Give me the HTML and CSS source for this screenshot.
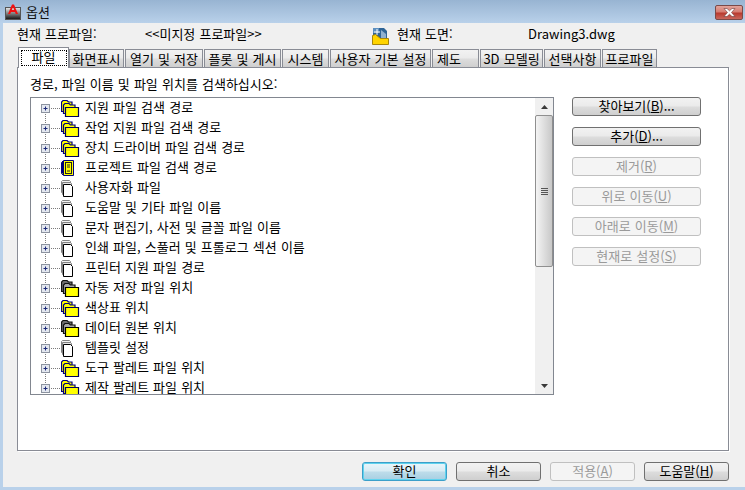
FILE: index.html
```html
<!DOCTYPE html>
<html lang="ko">
<head>
<meta charset="utf-8">
<title>옵션</title>
<link rel="stylesheet" href="styles.css">
</head>
<body>
<svg class="defs" width="0" height="0">
  <defs>
    <symbol id="i-exp" viewBox="0 0 30 20">
      <path d="M6.500 0V20M12 10.500H21" stroke="#7a7a7a" stroke-dasharray="1 1" fill="none"/>
      <rect x="2.500" y="6.500" width="8" height="8" fill="#e4e8f0" stroke="#8c93a0"/>
      <path d="M4.500 10.500h4M6.500 8.500v4" stroke="#1c2a78"/>
    </symbol>
    <symbol id="i-exp-first" viewBox="0 0 30 20">
      <path d="M6.500 10V20M12 10.500H21" stroke="#7a7a7a" stroke-dasharray="1 1" fill="none"/>
      <rect x="2.500" y="6.500" width="8" height="8" fill="#e4e8f0" stroke="#8c93a0"/>
      <path d="M4.500 10.500h4M6.500 8.500v4" stroke="#1c2a78"/>
    </symbol>
    <symbol id="i-folder" viewBox="0 0 20 18">
      <path d="M0.500 12.500V3l1.500-1.500h4L7.500 3H11v9.500z" fill="#ffff00" stroke="#00007c" stroke-width="1.200"/>
      <path d="M2.500 14.500V6L4 4.500h4L9.500 6H14v8.500z" fill="#ffff00" stroke="#00007c" stroke-width="1.200"/>
      <path d="M4.500 17.500V8.500h13v9z" fill="#ffff00" stroke="#00005a" stroke-width="1.200"/>
    </symbol>
    <symbol id="i-gray" viewBox="0 0 20 18">
      <path d="M0.500 12.500V3l1.500-1.500h4L7.500 3H11v9.500z" fill="#6e6e6e" stroke="#111" stroke-width="1.200"/>
      <path d="M2.500 14.500V6L4 4.500h4L9.500 6H14v8.500z" fill="#a8a8a8" stroke="#111" stroke-width="1.200"/>
      <path d="M4.500 17.500V8.500h13v9z" fill="#ffff00" stroke="#000" stroke-width="1.200"/>
    </symbol>
    <symbol id="i-proj" viewBox="0 0 20 18">
      <path d="M0.500 3.500l2-2h10v15h-10l-2-2z" fill="#ffff00" stroke="#00007c"/>
      <path d="M1.500 3v11.500M2.500 2v14" stroke="#00007c"/>
      <rect x="4.500" y="3.500" width="6" height="11" fill="#ffff00" stroke="#222"/>
      <path d="M6 6h3M6 8h3M6 12h3" stroke="#222"/>
    </symbol>
    <symbol id="i-doc" viewBox="0 0 20 18">
      <path d="M0.500 13.500V2.500l1-1h7l1 1v3h-9z" fill="#f2f2f2" stroke="#808080"/>
      <path d="M1.500 15.500V3.500h8l1 1v3h-9z" fill="#e2e2e2" stroke="#808080"/>
      <path d="M2.500 17.500V5.500h7l2 2v10z" fill="#fff" stroke="#000"/>
    </symbol>
  </defs>
</svg>

<div class="window">
  <header class="titlebar">
    <svg class="app-icon" width="16" height="16" viewBox="0 0 16 16">
      <defs><linearGradient id="g-app" x1="0" y1="0" x2="0" y2="1"><stop offset="0" stop-color="#ececec"/><stop offset="1" stop-color="#111"/></linearGradient></defs>
      <rect x="0.500" y="3.500" width="15" height="12" fill="url(#g-app)" stroke="#555"/>
      <path d="M3 10L7 0.500h2L13 10h-2.200L10 8H6L5.200 10zM6.800 6h2.400L8 3z" fill="#f01010"/>
    </svg>
    <span class="title-text">옵션</span>
    <button class="close" type="button" aria-label="닫기">
      <svg width="13" height="9" viewBox="0 0 13 9"><path d="M1 .5h3L6.500 2.800 9 .5h3L8.500 4.500l3.500 4H9L6.500 6.200 4 8.500H1l3.500-4z" fill="#fff" stroke="#6b3a3a" stroke-width=".6"/></svg>
    </button>
  </header>

  <main class="client">
    <div class="profile-row">
      <div class="profile-left">
        <span class="profile-label">현재 프로파일:</span>
        <span>&lt;&lt;미지정 프로파일&gt;&gt;</span>
      </div>
      <svg class="dwg-icon" width="17" height="18" viewBox="0 0 17 18">
        <path d="M1 1h11l3 3v8H1z" fill="#2f6496"/>
        <path d="M1 1h6v5H1z" fill="#5c8fc0"/>
        <path d="M5 2v6M2 5h6" stroke="#fff"/>
        <path d="M9 3l5 4v4H9z" fill="#8fb0cf"/>
        <path d="M0.500 17.500V8.500l3-1 5 4h8v6z" fill="#ffd400" stroke="#a8860c"/>
      </svg>
      <span class="drawing-label">현재 도면:</span>
      <span>Drawing3.dwg</span>
    </div>

    <nav class="tabs">
      <div class="tab tab-active"><span class="focus">파일</span></div>
      <div class="tab">화면표시</div>
      <div class="tab">열기 및 저장</div>
      <div class="tab">플롯 및 게시</div>
      <div class="tab">시스템</div>
      <div class="tab">사용자 기본 설정</div>
      <div class="tab tab-start">제도</div>
      <div class="tab">3D 모델링</div>
      <div class="tab">선택사항</div>
      <div class="tab">프로파일</div>
    </nav>

    <section class="panel">
      <p class="caption">경로, 파일 이름 및 파일 위치를 검색하십시오:</p>
      <div class="panel-body">
        <div class="listbox">
          <ul class="tree">
            <li class="row"><svg class="exp"><use href="#i-exp-first"/></svg><svg class="ico"><use href="#i-folder"/></svg><span>지원 파일 검색 경로</span></li>
            <li class="row"><svg class="exp"><use href="#i-exp"/></svg><svg class="ico"><use href="#i-folder"/></svg><span>작업 지원 파일 검색 경로</span></li>
            <li class="row"><svg class="exp"><use href="#i-exp"/></svg><svg class="ico"><use href="#i-folder"/></svg><span>장치 드라이버 파일 검색 경로</span></li>
            <li class="row"><svg class="exp"><use href="#i-exp"/></svg><svg class="ico"><use href="#i-proj"/></svg><span>프로젝트 파일 검색 경로</span></li>
            <li class="row"><svg class="exp"><use href="#i-exp"/></svg><svg class="ico"><use href="#i-doc"/></svg><span>사용자화 파일</span></li>
            <li class="row"><svg class="exp"><use href="#i-exp"/></svg><svg class="ico"><use href="#i-doc"/></svg><span>도움말 및 기타 파일 이름</span></li>
            <li class="row"><svg class="exp"><use href="#i-exp"/></svg><svg class="ico"><use href="#i-doc"/></svg><span>문자 편집기, 사전 및 글꼴 파일 이름</span></li>
            <li class="row"><svg class="exp"><use href="#i-exp"/></svg><svg class="ico"><use href="#i-doc"/></svg><span>인쇄 파일, 스풀러 및 프롤로그 섹션 이름</span></li>
            <li class="row"><svg class="exp"><use href="#i-exp"/></svg><svg class="ico"><use href="#i-doc"/></svg><span>프린터 지원 파일 경로</span></li>
            <li class="row"><svg class="exp"><use href="#i-exp"/></svg><svg class="ico"><use href="#i-gray"/></svg><span>자동 저장 파일 위치</span></li>
            <li class="row"><svg class="exp"><use href="#i-exp"/></svg><svg class="ico"><use href="#i-folder"/></svg><span>색상표 위치</span></li>
            <li class="row"><svg class="exp"><use href="#i-exp"/></svg><svg class="ico"><use href="#i-gray"/></svg><span>데이터 원본 위치</span></li>
            <li class="row"><svg class="exp"><use href="#i-exp"/></svg><svg class="ico"><use href="#i-doc"/></svg><span>템플릿 설정</span></li>
            <li class="row"><svg class="exp"><use href="#i-exp"/></svg><svg class="ico"><use href="#i-folder"/></svg><span>도구 팔레트 파일 위치</span></li>
            <li class="row"><svg class="exp"><use href="#i-exp"/></svg><svg class="ico"><use href="#i-folder"/></svg><span>제작 팔레트 파일 위치</span></li>
          </ul>
          <div class="scrollbar">
            <div class="arrow"><svg width="7" height="4" viewBox="0 0 7 4"><path d="M3.500 0L7 4H0z" fill="#3a3a3a"/></svg></div>
            <div class="thumb"><svg width="7" height="7" viewBox="0 0 7 7"><path d="M0 .5h7M0 2.500h7M0 4.500h7M0 6.500h7" stroke="#555"/></svg></div>
            <div class="track"></div>
            <div class="arrow"><svg width="7" height="4" viewBox="0 0 7 4"><path d="M3.500 4L7 0H0z" fill="#3a3a3a"/></svg></div>
          </div>
        </div>
        <div class="side-buttons">
          <button class="btn" type="button">찾아보기(<u>B</u>)...</button>
          <button class="btn" type="button">추가(<u>D</u>)...</button>
          <button class="btn" type="button" disabled>제거(<u>R</u>)</button>
          <button class="btn" type="button" disabled>위로 이동(<u>U</u>)</button>
          <button class="btn" type="button" disabled>아래로 이동(<u>M</u>)</button>
          <button class="btn" type="button" disabled>현재로 설정(<u>S</u>)</button>
        </div>
      </div>
    </section>

    <footer class="footer">
      <button class="btn btn-default" type="button">확인</button>
      <button class="btn" type="button">취소</button>
      <button class="btn" type="button" disabled>적용(<u>A</u>)</button>
      <button class="btn" type="button">도움말(<u>H</u>)</button>
    </footer>
  </main>
</div>
</body>
</html>
```

FILE: styles.css
```css
* { box-sizing: border-box; }

html, body {
  margin: 0;
  padding: 0;
  width: 745px;
  height: 490px;
  overflow: hidden;
}

body {
  font-family: "Noto Sans CJK KR", "Liberation Sans", sans-serif;
  font-size: 13px;
  word-spacing: 0.5px;
  color: #000;
  background: #b9d1ea;
}

.defs { display: block; height: 0; }

.window {
  width: 745px;
  height: 490px;
  padding-left: 3px;
  background: #b9d1ea;
  display: flex;
  flex-direction: column;
}

.titlebar {
  height: 23px;
  margin-left: -3px;
  padding: 4px 2px 0 5px;
  flex: none;
  display: flex;
  align-items: flex-start;
  background: linear-gradient(#98b4d2, #b9d1ea);
}

.app-icon { flex: none; }

.title-text {
  margin-left: 5px;
  line-height: 15px;
  color: #111;
}

.close {
  margin: 1px 0 0 auto;
  width: 28px;
  height: 15px;
  padding: 0;
  flex: none;
  display: flex;
  align-items: center;
  justify-content: center;
  border: 1px solid #7a4a48;
  border-radius: 2px;
  background: linear-gradient(#e2a49b 0, #d67d72 45%, #b93a2f 55%, #c9665c 100%);
}

.client {
  height: 464px;
  flex: none;
  padding: 0 14px 0 14px;
  background: #f0f0f0;
  display: flex;
  flex-direction: column;
}

.profile-row {
  height: 20px;
  margin-bottom: 4px;
  flex: none;
  display: flex;
  align-items: center;
}

.profile-left {
  width: 355px;
  display: flex;
}

.profile-label { width: 128px; }

.dwg-icon { flex: none; margin-top: 5px; }

.drawing-label {
  margin-left: 8px;
  width: 131px;
}

.tabs {
  height: 20px;
  margin-left: 2px;
  flex: none;
  display: grid;
  grid-template-columns: 50px 56px 79px 78px 48px 102px 48px 64px 58px 56px;
  align-items: end;
  position: relative;
  z-index: 1;
}

.tab {
  height: 18px;
  margin-right: 1px;
  border: 1px solid #898c95;
  border-bottom: 0;
  background: linear-gradient(#f2f2f2 0, #ebebeb 45%, #dcdcdc 55%, #cfcfcf 100%);
  display: flex;
  align-items: center;
  justify-content: center;
  line-height: 16px;
  white-space: nowrap;
}

.tab-start {
  justify-content: flex-start;
  padding-left: 4px;
}

.tab-active {
  height: 21px;
  margin: 0 0 -1px -1px;
  background: #fff;
}

.focus {
  width: 46px;
  height: 16px;
  display: block;
  text-align: center;
  line-height: 13px;
  outline: 1px dotted #000;
  outline-offset: -1px;
}

.panel {
  width: 712px;
  height: 384px;
  flex: none;
  padding: 7px 12px 0 12px;
  background: #fff;
  border: 1px solid #898c95;
  box-shadow: 1px 1px 0 #fff;
}

.caption {
  margin: 0;
  height: 22px;
  line-height: 17px;
}

.panel-body {
  display: flex;
  align-items: flex-start;
}

.listbox {
  width: 524px;
  height: 298px;
  flex: none;
  display: flex;
  overflow: hidden;
  border: 1px solid #828790;
  background: #fff;
}

.tree {
  flex: 1;
  min-width: 0;
  margin: 0;
  padding: 0 0 0 8px;
  list-style: none;
  overflow: hidden;
}

.row {
  height: 20px;
  display: flex;
  align-items: center;
  white-space: nowrap;
}

.row span {
  margin-left: 4px;
  padding-bottom: 2px;
  line-height: 20px;
}

.exp { width: 30px; height: 20px; flex: none; overflow: visible; }

.ico { width: 20px; height: 18px; flex: none; margin-left: -8px; }

.scrollbar {
  width: 18px;
  flex: none;
  display: flex;
  flex-direction: column;
  background: #f0f0f0;
}

.arrow {
  height: 17px;
  flex: none;
  display: flex;
  align-items: center;
  justify-content: center;
}

.thumb {
  height: 152px;
  flex: none;
  display: flex;
  align-items: center;
  justify-content: center;
  border: 1px solid #8f8f8f;
  border-radius: 2px;
  background: linear-gradient(90deg, #f4f4f4, #dcdcdc 55%, #c8c8c8);
}

.track { flex: 1; }

.side-buttons {
  margin-left: 18px;
  display: flex;
  flex-direction: column;
  gap: 11px;
}

.btn {
  width: 129px;
  height: 19px;
  padding: 0 0 2px;
  font: inherit;
  word-spacing: 0.5px;
  line-height: 15px;
  color: #000;
  border: 1px solid #707070;
  border-radius: 3px;
  background: linear-gradient(#f2f2f2 0, #ebebeb 45%, #dcdcdc 55%, #cfcfcf 100%);
  white-space: nowrap;
}

.btn:disabled {
  color: #9a9a9a;
  border-color: #c0c0c0;
  background: #f4f4f4;
}

.footer {
  height: 19px;
  margin-top: 11px;
  padding-left: 345px;
  flex: none;
  display: flex;
  gap: 9px;
}

.footer .btn { width: 85px; }

.btn-default {
  border-color: #3c9fc9;
  box-shadow: inset 0 0 0 1px #5fd3ee;
  background: linear-gradient(#eaf6fb 0, #d8ecf4 45%, #bcdcea 55%, #a7cfe2 100%);
}
```
